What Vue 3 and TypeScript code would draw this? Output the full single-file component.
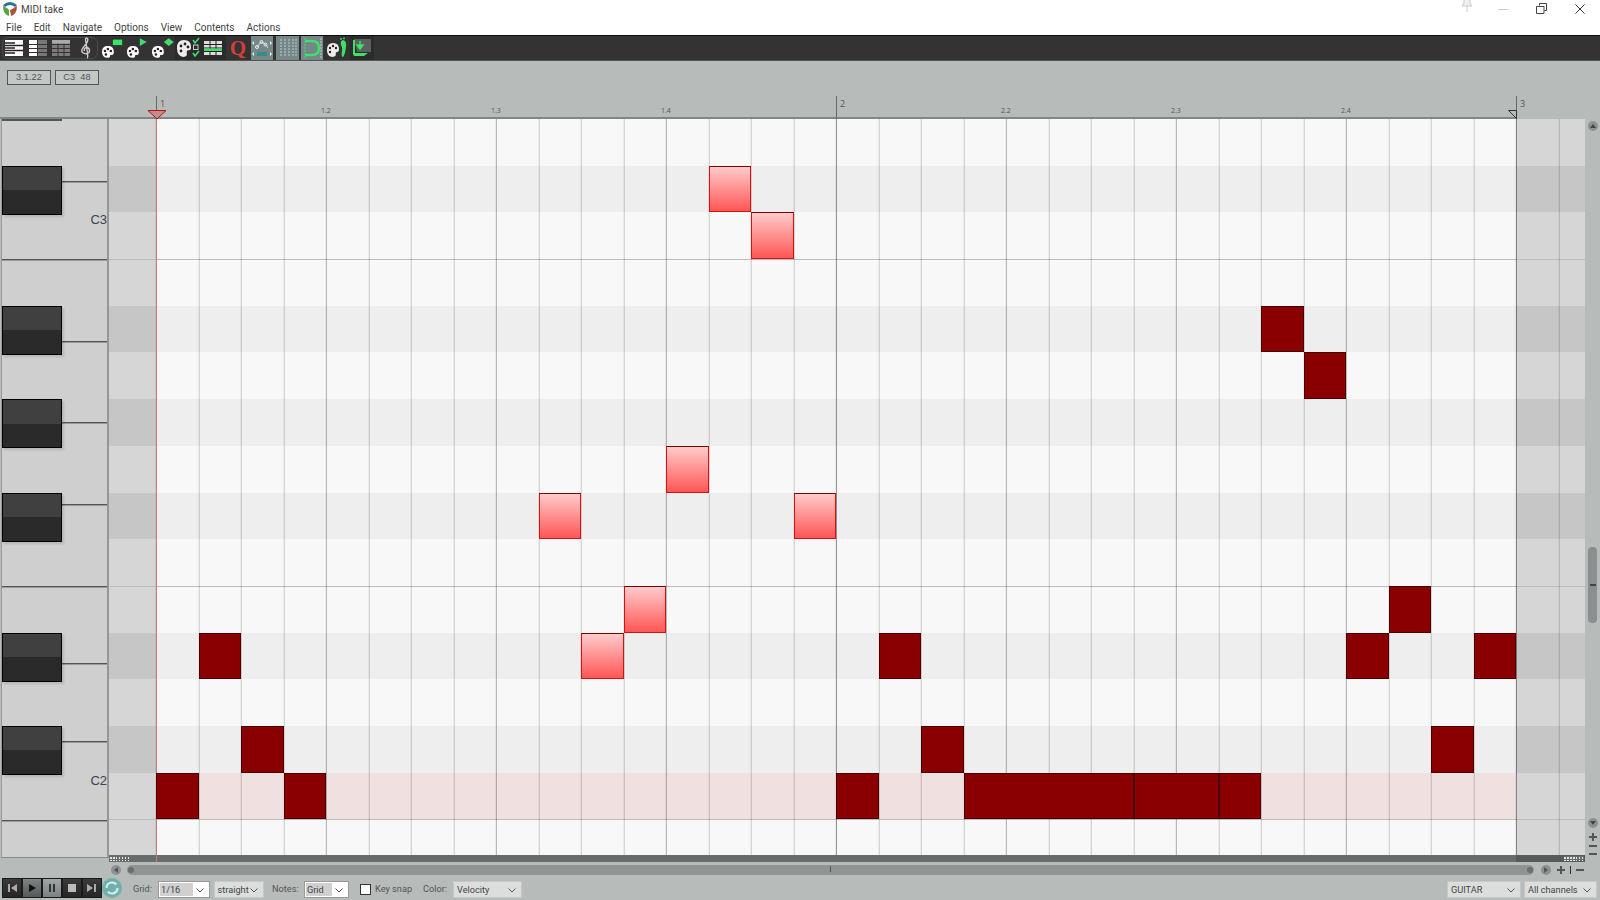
<script setup lang="ts">
interface Note { c: number; r: number; n?: number; kind: 'light' | 'dark' }
const COLS = 33
const ROWS = 15
const darkRows = [1, 4, 6, 8, 11, 13]
const whiteLines = [3, 10, 15]
const notes: Note[] = [
  { c: 13, r: 1, kind: 'light' }, { c: 14, r: 2, kind: 'light' }, { c: 12, r: 7, kind: 'light' },
  { c: 9, r: 8, kind: 'light' }, { c: 15, r: 8, kind: 'light' }, { c: 11, r: 10, kind: 'light' },
  { c: 10, r: 11, kind: 'light' },
  { c: 26, r: 4, kind: 'dark' }, { c: 27, r: 5, kind: 'dark' }, { c: 1, r: 11, kind: 'dark' },
  { c: 2, r: 13, kind: 'dark' }, { c: 0, r: 14, kind: 'dark' }, { c: 3, r: 14, kind: 'dark' },
  { c: 16, r: 14, kind: 'dark' }, { c: 17, r: 11, kind: 'dark' }, { c: 18, r: 13, kind: 'dark' },
  { c: 19, r: 14, n: 4, kind: 'dark' }, { c: 23, r: 14, n: 2, kind: 'dark' }, { c: 25, r: 14, kind: 'dark' },
  { c: 29, r: 10, kind: 'dark' }, { c: 28, r: 11, kind: 'dark' }, { c: 31, r: 11, kind: 'dark' },
  { c: 30, r: 13, kind: 'dark' },
]
const menus = ['File', 'Edit', 'Navigate', 'Options', 'View', 'Contents', 'Actions']
const rowList = Array.from({ length: ROWS + 1 }, (_, i) => i)
const colList = Array.from({ length: COLS + 1 }, (_, i) => i)
const rulerBeats = [
  { c: 0, t: '1', big: true }, { c: 4, t: '1.2', big: false }, { c: 8, t: '1.3', big: false },
  { c: 12, t: '1.4', big: false }, { c: 16, t: '2', big: true }, { c: 20, t: '2.2', big: false },
  { c: 24, t: '2.3', big: false }, { c: 28, t: '2.4', big: false }, { c: 32, t: '3', big: true },
]
const pianoRows = rowList.slice(0, ROWS)
function rowClass(r: number) {
  return { band: true, dim: darkRows.includes(r), hl: r === 14, line: whiteLines.includes(r) }
}
function colClass(c: number) {
  return { vline: true, beat: c % 4 === 0, measure: c % 16 === 0 }
}
function noteStyle(n: Note) {
  return { gridColumn: `${n.c + 2} / span ${n.n ?? 1}`, gridRow: `${n.r + 1}` }
}
function colStyle(c: number) {
  return { gridColumn: `${c + 2}` }
}
function rowStyle(r: number) {
  return { gridRow: `${r + 1}` }
}
</script>

<template>
  <div class="app">
    <header class="titlebar">
      <svg class="logo" viewBox="0 0 16 16" width="16" height="16">
        <circle cx="8" cy="8" r="7" fill="#fff" />
        <path d="M1 4 Q8 -2 15 4 L13 6 Q8 2 3 6 Z" fill="#2a6f9a" />
        <path d="M1 5 Q1 13 7 15 L7 9 Q5 7 3 6 Z" fill="#5da33b" />
        <path d="M15 5 Q15 13 9 15 L8 9 Q11 8 13 6 Z" fill="#a8533a" />
      </svg>
      <span class="title">MIDI take</span>
      <span class="spacer"></span>
      <svg class="winbtn pin" viewBox="0 0 14 14" width="14" height="14"><path d="M4 0 V5 L2 8 H12 L10 5 V0 M7 8 V14" fill="#eee" stroke="#ccc" /></svg>
      <span class="winmin"></span>
      <svg class="winbtn restore" viewBox="0 0 12 12" width="12" height="12"><path d="M3.5 2.5 V.5 H10.5 V7.5 H8.5 M.5 3.5 H8 V10.5 H.5 Z" fill="none" stroke="#444" /></svg>
      <svg class="winbtn close" viewBox="0 0 12 12" width="12" height="12"><path d="M1.5 1.5 L10.5 10.5 M10.5 1.5 L1.5 10.5" stroke="#333" stroke-width="1" /></svg>
    </header>
    <nav class="menubar">
      <span v-for="m in menus" :key="m">{{ m }}</span>
    </nav>
    <div class="toolbar">
      <div class="tgroup">
        <svg viewBox="0 0 18 18" width="18" height="18" class="tic">
          <rect x="0" y="1" width="18" height="16" fill="#fff" />
          <path d="M0 4 H10 M0 9 H10 M0 14 H10 M0 6.5 H18 M0 11.5 H18" stroke="#222" stroke-width="1.5" />
        </svg>
        <svg viewBox="0 0 18 18" width="18" height="18" class="tic">
          <rect x="0" y="1" width="8" height="16" fill="#fff" />
          <rect x="9" y="1" width="9" height="16" fill="#777" />
          <path d="M0 5.5 H18 M0 9.5 H18 M0 13.5 H18" stroke="#333" />
        </svg>
        <svg viewBox="0 0 18 18" width="18" height="18" class="tic">
          <rect x="0" y="1" width="18" height="16" fill="#7c7c7c" />
          <path d="M6 1 V17 M12 1 V17 M0 5.5 H18 M0 9.5 H18 M0 13.5 H18" stroke="#333" />
          <rect x="0" y="1" width="18" height="3.5" fill="#aaa" />
        </svg>
        <svg viewBox="0 0 12 22" width="12" height="22" class="tic clef">
          <path d="M7 21 Q8 21 7.5 16 L5.5 2.5 Q6 0 7.5 1.5 Q9 4 4 9.5 Q0.5 13 2.5 15.5 Q6 18 9 15.5 Q10.5 12 7.5 10.5 Q3.5 10.5 4.5 14" fill="none" stroke="#ccc" stroke-width="1.4" />
        </svg>
      </div>
      <div class="pal">
        <svg viewBox="0 0 24 22" width="24" height="22">
          <path d="M1 15 Q1 9 7 9 Q13 9 13 15 Q13 18 11 18 Q9 17 9 20 Q8 21 6 21 Q1 20 1 15 Z" fill="#fff" />
          <circle cx="4" cy="14" r="1.3" fill="#222" /><circle cx="7" cy="12" r="1.3" fill="#222" /><circle cx="10" cy="14" r="1.3" fill="#222" /><circle cx="5" cy="17.5" r="1.3" fill="#222" />
          <rect x="11.5" y="2" width="10.5" height="6.5" fill="#3ee06a" stroke="#1a1a1a" stroke-width=".6" />
        </svg>
        <svg viewBox="0 0 24 22" width="24" height="22">
          <path d="M1 15 Q1 9 7 9 Q13 9 13 15 Q13 18 11 18 Q9 17 9 20 Q8 21 6 21 Q1 20 1 15 Z" fill="#fff" />
          <circle cx="4" cy="14" r="1.3" fill="#222" /><circle cx="7" cy="12" r="1.3" fill="#222" /><circle cx="10" cy="14" r="1.3" fill="#222" /><circle cx="5" cy="17.5" r="1.3" fill="#222" />
          <path d="M14 1 L21 5 L14 9 Z" fill="#3ee06a" />
        </svg>
        <svg viewBox="0 0 24 22" width="24" height="22">
          <path d="M1 15 Q1 9 7 9 Q13 9 13 15 Q13 18 11 18 Q9 17 9 20 Q8 21 6 21 Q1 20 1 15 Z" fill="#fff" />
          <circle cx="4" cy="14" r="1.3" fill="#222" /><circle cx="7" cy="12" r="1.3" fill="#222" /><circle cx="10" cy="14" r="1.3" fill="#222" /><circle cx="5" cy="17.5" r="1.3" fill="#222" />
          <path d="M18 1 L23 5 L18 9 L13 5 Z" fill="#3ee06a" />
        </svg>
      </div>
      <div class="tbtn dark w25">
        <svg viewBox="0 0 24 22" width="24" height="22">
          <path d="M1 11 Q1 3 8 3 Q15 3 15 10 Q15 14 12 13 Q10 14 11 18 Q10 20 7 20 Q1 19 1 11 Z" fill="#eee" />
          <circle cx="5" cy="9" r="1.4" fill="#222" /><circle cx="9" cy="7" r="1.4" fill="#222" /><circle cx="12" cy="10" r="1.4" fill="#222" /><circle cx="5" cy="14" r="1.4" fill="#222" />
          <path d="M17 3 L19 6 L23 1 M17 16 L19 19 L23 14" stroke="#3ee06a" stroke-width="1.6" fill="none" />
          <rect x="17.5" y="8" width="4.5" height="4.5" fill="none" stroke="#ccc" />
        </svg>
      </div>
      <div class="tbtn dark w26">
        <svg viewBox="0 0 20 18" width="20" height="18">
          <rect x="1" y="2" width="18" height="14" fill="#ddd" />
          <path d="M1 5.5 H19 M1 9 H19 M1 12.5 H19 M7 2 V16 M13 2 V16" stroke="#222" stroke-width="1" />
          <rect x="1" y="9.5" width="18" height="2.5" fill="#3ee06a" />
        </svg>
      </div>
      <div class="tbtn q">Q</div>
      <div class="tbtn on a">
        <svg viewBox="0 0 22 22" width="22" height="22">
          <path d="M6 10 L10 5 L14 7 L17 11" stroke="#d8dddd" stroke-width="1" fill="none" />
          <circle cx="6" cy="10" r="1.5" fill="none" stroke="#eef" /><circle cx="10.5" cy="5" r="1.5" fill="none" stroke="#eef" /><circle cx="14.5" cy="7.5" r="1.5" fill="none" stroke="#eef" />
          <rect x="6" y="15" width="10" height="4" fill="#3a8a8c" />
          <path d="M1 6 L3 4 V8 Z M21 6 L19 4 V8 Z M1 17 L3 15 V19 Z M21 17 L19 15 V19 Z" fill="#dfe" />
        </svg>
      </div>
      <div class="tbtn on b">
        <svg viewBox="0 0 20 20" width="20" height="20">
          <path d="M3 1 V19 M7 1 V19 M11 1 V19 M15 1 V19 M18 1 V19" stroke="#c3cccc" stroke-width="1" stroke-dasharray="2 1" />
        </svg>
      </div>
      <div class="tbtn on c">
        <svg viewBox="0 0 22 22" width="22" height="22">
          <path d="M4 1 V21" stroke="#3ee06a" stroke-dasharray="2 1" />
          <path d="M4 4 H11 Q18 4 18 11 Q18 18 11 18 H4" stroke="#3ee06a" stroke-width="2.4" fill="none" />
          <path d="M20 1 V21" stroke="#c3cccc" stroke-dasharray="2 1" />
        </svg>
      </div>
      <div class="tbtn foot">
        <svg viewBox="0 0 24 22" width="24" height="22">
          <path d="M1 13 Q1 6 7 6 Q13 6 13 12 Q13 15 11 15 Q9 15 10 18 Q9 20 6 20 Q1 19 1 13 Z" fill="#eee" />
          <circle cx="4" cy="11" r="1.2" fill="#222" /><circle cx="7" cy="9" r="1.2" fill="#222" /><circle cx="10" cy="11" r="1.2" fill="#222" /><circle cx="4" cy="15" r="1.2" fill="#222" />
          <path d="M15 8 Q14 4 17 3 Q21 4 20 10 Q19 18 17 20 Q15 20 16 14 Q17 11 15 8 Z" fill="#3ee06a" />
          <circle cx="15" cy="2" r=".9" fill="#3ee06a" /><circle cx="18" cy="1.4" r=".9" fill="#3ee06a" />
        </svg>
      </div>
      <div class="tbtn dark w24">
        <svg viewBox="0 0 22 20" width="22" height="20">
          <path d="M3 1 H20 V14 H6 Z" fill="#5a5f5f" />
          <path d="M9 3 V8 M6 7 L9 11 L12 7 Z" stroke="#3ee06a" fill="#3ee06a" stroke-width="1.5" />
          <path d="M2 2 V16 Q2 18 5 18 H13 L17 15 H4 V2 Z" fill="#3ee06a" />
        </svg>
      </div>
    </div>

    <section class="main">
      <div class="readouts">
        <span class="readout">3.1.22</span>
        <span class="readout">C3&nbsp; 48</span>
      </div>

      <div class="ruler">
        <div v-for="b in rulerBeats" :key="b.c" class="tick" :class="{ big: b.big }">
          <span>{{ b.t }}</span>
        </div>
        <svg class="start" viewBox="0 0 18 9" width="18" height="9"><path d="M0 .5 H18 L9 9 Z" fill="#c48c88" stroke="#b01515" /></svg>
        <svg class="end" viewBox="0 0 9 9" width="9" height="9"><path d="M8.5 .5 V8.5 L.5 .5 Z" fill="none" stroke="#333" /></svg>
      </div>

      <div class="editor">
        <div class="piano">
          <div class="blackend"></div>
          <div class="keyrows">
            <div v-for="r in pianoRows" :key="r" class="keyrow" :style="rowStyle(r)">
              <template v-if="darkRows.includes(r)">
                <div class="bkey"><i></i><i></i></div>
                <div class="split"></div>
              </template>
              <div v-if="whiteLines.includes(r)" class="wline"></div>
              <span v-if="r === 2" class="oct">C3</span>
              <span v-if="r === 14" class="oct">C2</span>
            </div>
          </div>
          <div class="wline bottom"></div>
        </div>

        <div class="roll">
          <div class="lanes">
            <div v-for="r in rowList" :key="'r' + r" :class="rowClass(r)" :style="rowStyle(r)"></div>
            <div v-for="c in colList" :key="'c' + c" :class="colClass(c)" :style="colStyle(c)"></div>
            <div class="playline"></div>
            <div v-for="(n, i) in notes" :key="i" class="note" :class="n.kind" :style="noteStyle(n)"></div>
          </div>
          <div class="hband">
            <span class="grip"></span>
            <span class="grip r"></span>
          </div>
        </div>

        <aside class="vscroll">
          <span class="rbtn">
            <svg viewBox="0 0 8 8" width="8" height="8"><path d="M1 6 L4 2 L7 6 Z" fill="#444" /></svg>
          </span>
          <span class="thumb"><i></i></span>
          <span class="rbtn down">
            <svg viewBox="0 0 8 8" width="8" height="8"><path d="M1 2 L4 6 L7 2 Z" fill="#444" /></svg>
          </span>
          <span class="pm plus"></span>
          <span class="pm dash"></span>
          <span class="pm dash last"></span>
        </aside>
      </div>

      <div class="hscroll">
        <span class="rbtn"><svg viewBox="0 0 8 8" width="8" height="8"><path d="M6 1 L2 4 L6 7 Z" fill="#555" /></svg></span>
        <div class="track">
          <b class="dot"></b>
          <b class="centre"></b>
          <b class="dot"></b>
        </div>
        <span class="rbtn"><svg viewBox="0 0 8 8" width="8" height="8"><path d="M2 1 L6 4 L2 7 Z" fill="#555" /></svg></span>
        <span class="pm plus h"></span>
        <span class="sepbar"></span>
        <span class="pm dash h"></span>
      </div>
    </section>

    <footer class="bottombar">
      <div class="transport">
        <button class="tp"><svg viewBox="0 0 12 12" width="12" height="12"><path d="M2 2 H4 V10 H2 Z M11 2 V10 L5 6 Z" fill="#aaa" /></svg></button>
        <button class="tp lit"><svg viewBox="0 0 12 12" width="12" height="12"><path d="M3 2 L10 6 L3 10 Z" fill="#111" /></svg></button>
        <button class="tp lit2"><svg viewBox="0 0 12 12" width="12" height="12"><path d="M3 2 H5 V10 H3 Z M7 2 H9 V10 H7 Z" fill="#333" /></svg></button>
        <button class="tp"><svg viewBox="0 0 12 12" width="12" height="12"><rect x="2" y="2" width="8" height="8" fill="#bbb" /></svg></button>
        <button class="tp"><svg viewBox="0 0 12 12" width="12" height="12"><path d="M1 2 L7 6 L1 10 Z M8 2 H10 V10 H8 Z" fill="#aaa" /></svg></button>
      </div>
      <span class="loop">
        <svg viewBox="0 0 20 20" width="20" height="20"><circle cx="10" cy="10" r="10" fill="#6fb0ac" /><circle cx="10" cy="10" r="5.5" fill="none" stroke="#d8ecea" stroke-width="2.2" stroke-dasharray="13 4" /></svg>
      </span>
      <label class="lbl l-grid">Grid:</label>
      <span class="sel white w-grid"><em>1/16</em><svg class="chev" viewBox="0 0 8 5" width="8" height="5"><path d="M.5 .5 L4 4 L7.5 .5" fill="none" stroke="#555" /></svg></span>
      <span class="sel w-str">straight<svg class="chev" viewBox="0 0 8 5" width="8" height="5"><path d="M.5 .5 L4 4 L7.5 .5" fill="none" stroke="#555" /></svg></span>
      <label class="lbl l-notes">Notes:</label>
      <span class="sel white w-notes"><em class="g">Grid</em><svg class="chev" viewBox="0 0 8 5" width="8" height="5"><path d="M.5 .5 L4 4 L7.5 .5" fill="none" stroke="#555" /></svg></span>
      <span class="check"></span>
      <label class="lbl l-ks">Key snap</label>
      <label class="lbl l-col">Color:</label>
      <span class="sel w-vel">Velocity<svg class="chev" viewBox="0 0 8 5" width="8" height="5"><path d="M.5 .5 L4 4 L7.5 .5" fill="none" stroke="#555" /></svg></span>
      <span class="spacer"></span>
      <span class="sel w-gtr">GUITAR<svg class="chev" viewBox="0 0 8 5" width="8" height="5"><path d="M.5 .5 L4 4 L7.5 .5" fill="none" stroke="#555" /></svg></span>
      <span class="sel w-ch">All channels<svg class="chev" viewBox="0 0 8 5" width="8" height="5"><path d="M.5 .5 L4 4 L7.5 .5" fill="none" stroke="#555" /></svg></span>
    </footer>
  </div>
</template>

<style>
html, body { margin: 0; background: #b7bcbb; overflow: hidden; }
</style>

<style scoped>
.app {
  width: 1600px; height: 900px; display: flex; flex-direction: column; overflow: hidden;
  font-family: Roboto, "Liberation Sans", sans-serif; background: #b7bcbb; color: #333;
}
.app > * { flex: none; }
.spacer { flex: 1; }
.titlebar { height: 18px; background: #fff; display: flex; align-items: center; padding-left: 2px; padding-right: 14px; }
.logo { margin-right: 3px; }
.title { font-size: 10px; color: #444; }
.pin { margin-right: 24px; margin-top: -8px; }
.winmin { width: 10px; height: 1px; background: #ccc; margin-right: 28px; }
.restore { margin-right: 26px; }
.menubar { height: 17px; background: #fff; display: flex; gap: 12px; padding-left: 6px; padding-top: 2px; box-sizing: border-box; font-size: 10px; align-items: center; color: #444; }
.toolbar { height: 24px; background: #333; border-top: 1px solid #0c0c0c; border-bottom: 1px solid #555; display: flex; align-items: stretch; }
.tgroup { width: 96px; margin: 1px 0 1px 2px; border: 1px solid #4a4a4a; border-radius: 6px; box-sizing: border-box; display: flex; align-items: center; padding-left: 2px; flex: none; }
.tic { margin-right: 5.5px; flex: none; }
.tic.clef { margin-left: 4px; margin-right: 0; }
.pal { width: 77px; display: flex; align-items: center; gap: 1.5px; padding-left: 3px; box-sizing: border-box; flex: none; }
.tbtn { display: flex; align-items: center; justify-content: center; flex: none; }
.tbtn.dark { background: #2b2b2b; }
.w25 { width: 25px; }
.w26 { width: 26px; }
.w24 { width: 24px; }
.tbtn.q { font-family: "Liberation Serif", serif; color: #d23f3a; font-weight: 700; font-size: 21px; width: 24px; }
.tbtn.on { background: #758787; }
.tbtn.a { width: 22px; margin-left: 1px; }
.tbtn.b { width: 23px; margin-left: 3px; }
.tbtn.c { width: 22px; margin-left: 2px; }
.tbtn.foot { width: 25px; margin-left: 2px; }
.main { height: 817px; display: flex; flex-direction: column; }
.readouts { height: 35px; display: flex; gap: 4px; padding: 9px 0 0 7px; box-sizing: border-box; flex: none; }
.readout { width: 44px; height: 15px; border: 1px solid #555; box-sizing: border-box; background: #c3c8c7; font: 9.3px/13px "Liberation Sans", sans-serif; text-align: center; color: #555; }
.ruler { height: 23px; display: flex; align-items: flex-start; padding-left: 156px; position: relative; border-bottom: 2px solid #828686; box-sizing: border-box; flex: none; width: 1516px; }
.tick { position: relative; flex: none; width: 170px; height: 21px; box-sizing: border-box; }
.tick span { position: absolute; left: -5px; top: 11px; font: 7px/8px "Open Sans", sans-serif; color: #555; }
.tick.big { border-left: 1px solid #666; height: 23px; }
.tick.big span { top: 2px; left: 3px; font-size: 9px; line-height: 12px; }
.tick:last-of-type { width: 1px; }
.start { position: absolute; left: 147.5px; bottom: -2px; }
.end { position: absolute; left: 1507.5px; bottom: -2px; }
.editor { height: 743px; display: flex; flex: none; }
.piano { width: 108px; height: 739px; margin-left: 1px; border-left: 1px solid #9a9a9a; border-right: 2px solid #969696; border-bottom: 1px solid #8a8a8a; background: #cfcfcf; position: relative; box-sizing: border-box; flex: none; }
.blackend { position: absolute; left: 0; top: 0; width: 60px; height: 2px; background: #555; }
.keyrows { display: grid; grid-template-rows: repeat(15, 46.7px); }
.keyrow { position: relative; min-height: 0; }
.bkey { position: absolute; left: 0; top: 0; width: 60px; height: 49px; border: 1px solid #000; box-sizing: border-box; display: flex; flex-direction: column; box-shadow: 2px 2px 2px rgba(0,0,0,.12); z-index: 1; }
.bkey i { flex: 1; background: #404040; }
.bkey i + i { background: #2a2a2a; }
.split { position: absolute; left: 60px; right: 0; top: 15px; height: 1px; background: #555; border-bottom: 1px solid #999; }
.keyrow:nth-child(5) .split { top: 35px; }
.keyrow:nth-child(7) .split { top: 23px; }
.keyrow:nth-child(9) .split { top: 11px; }
.keyrow:nth-child(12) .split { top: 30px; }
.keyrow:nth-child(14) .split { top: 15px; }
.wline { position: absolute; left: 0; right: 0; top: 0; height: 1px; background: #555; border-bottom: 1px solid #999; }
.wline.bottom { top: 700.5px; }
.oct { position: absolute; right: 0; top: 1px; font: 13px/14px "Liberation Sans", sans-serif; color: #3b4250; }
.roll { width: 1476px; flex: none; }
.lanes {
  display: grid; position: relative; height: 736px; overflow: hidden;
  grid-template-columns: 47px repeat(33, 42.5px) 26.5px;
  grid-template-rows: repeat(15, 46.7px) 35.5px;
}
.band { grid-column: 1 / -1; background: linear-gradient(90deg, #d6d6d6 0 47px, #f8f8f8 47px 1407px, #d6d6d6 1407px); }
.band.dim { background: linear-gradient(90deg, #c6c6c6 0 47px, #eeeeee 47px 1407px, #c6c6c6 1407px); }
.band.hl { background: linear-gradient(90deg, #d6d6d6 0 47px, #f0e0e0 47px 1407px, #d6d6d6 1407px); }
.band.line { box-shadow: inset 0 1px 0 #bcbcbc; }
.vline { grid-row: 1 / -1; border-left: 1px solid rgba(0,0,0,.14); box-shadow: -1px 0 0 rgba(0,0,0,.05); min-width: 0; }
.vline.beat { border-left-color: rgba(0,0,0,.26); }
.vline.measure { border-left-color: rgba(0,0,0,.4); }
.playline { position: absolute; left: 47px; top: 0; bottom: 0; width: 1px; background: #c87878; }
.note { box-sizing: border-box; z-index: 1; }
.note.light { background: linear-gradient(#ffcaca, #ff5656); border: 1px solid #d81010; border-top-color: #700; }
.note.dark { background: #8a0000; border: 1px solid #4a0000; }
.hband { height: 7px; background: linear-gradient(90deg, #676c6c 0 47px, #c87878 47px 48px, #676c6c 48px 1407px, #575b5b 1407px); position: relative; }
.grip { position: absolute; left: 1px; top: 1px; width: 20px; height: 5px; background:
  repeating-linear-gradient(90deg, transparent 0 1.5px, #676c6c 1.5px 3px),
  repeating-linear-gradient(0deg, transparent 0 1.5px, #676c6c 1.5px 2.5px),
  #e4e4e4; }
.grip.r { left: auto; right: 1px; }
.vscroll { width: 15px; display: flex; flex-direction: column; align-items: center; flex: none; padding-top: 2px; box-sizing: border-box; }
.rbtn { width: 10px; height: 10px; border-radius: 50%; background: #8d9191; display: flex; align-items: center; justify-content: center; flex: none; }
.thumb { width: 9px; height: 76px; background: #8b8f8f; border-radius: 4px; margin-top: 416px; flex: none; position: relative; }
.thumb i { position: absolute; left: 1.5px; top: 37px; width: 6px; height: 2px; background: #444; }
.rbtn.down { margin-top: 195px; }
.pm { display: block; background: #555; position: relative; flex: none; }
.pm.plus { width: 8px; height: 2px; margin-top: 8px; }
.pm.plus::after { content: ""; position: absolute; left: 3px; top: -3px; width: 2px; height: 8px; background: #555; }
.pm.dash { width: 8px; height: 2px; margin-top: 7px; }
.pm.dash.last { margin-top: 6px; }
.hscroll { height: 10px; display: flex; align-items: center; padding-left: 111px; margin-top: 3px; flex: none; }
.track { width: 1407px; height: 10px; background: #909494; margin: 0 7px 0 6px; display: flex; align-items: center; justify-content: space-between; padding: 0 1px; box-sizing: border-box; position: relative; border-radius: 5px; flex: none; }
.dot { width: 6px; height: 6px; border-radius: 50%; background: #6b6f6f; }
.centre { width: 1px; height: 6px; background: #555; position: absolute; left: 703px; top: 1px; }
.pm.h { margin: 0; }
.pm.plus.h { margin-left: 6px; }
.sepbar { width: 1px; height: 8px; background: #333; margin-left: 5px; flex: none; }
.pm.dash.h { margin-left: 5px; }
.bottombar { height: 22px; display: flex; align-items: flex-start; font-size: 9.2px; color: #444; }
.transport { display: flex; margin-left: 2px; height: 20px; background: #222; flex: none; }
.tp { width: 20px; height: 20px; padding: 0; border: 1px solid #1a1a1a; background: linear-gradient(#3a3a3a, #262626); display: flex; align-items: center; justify-content: center; }
.tp.lit { background: linear-gradient(#7e8383, #555959); }
.tp.lit2 { background: linear-gradient(#a0a5a5, #7c8181); }
.loop { margin-left: 0; display: flex; flex: none; }
.lbl { color: #555; box-sizing: border-box; line-height: 16px; margin-top: 3px; flex: none; }
.l-grid { margin-left: 11px; width: 25px; }
.sel { height: 17px; margin-top: 3px; border: 1px solid #c4c8c7; background: #dcdedd; box-sizing: border-box; display: flex; align-items: center; padding-left: 3px; position: relative; color: #444; flex: none; }
.sel.white { background: #fff; border-color: #999; padding-left: 1px; }
.sel em { font-style: normal; background: #d0d0d0; display: block; width: 33px; height: 13px; line-height: 13px; padding-left: 1px; box-sizing: border-box; }
.sel em.g { width: 26px; }
.chev { position: absolute; right: 5px; top: 6px; }
.w-grid { width: 52px; }
.w-str { width: 50px; margin-left: 3.5px; }
.l-notes { margin-left: 8.5px; width: 32px; }
.w-notes { width: 45px; }
.check { width: 11px; height: 11px; background: #fff; border: 1px solid #333; box-sizing: border-box; margin: 6px 0 0 11px; flex: none; }
.l-ks { margin-left: 4px; width: 48px; }
.l-col { width: 30px; }
.w-vel { width: 69px; }
.w-gtr { width: 74px; }
.w-ch { width: 73px; margin-left: 3px; margin-right: 3px; }
</style>
